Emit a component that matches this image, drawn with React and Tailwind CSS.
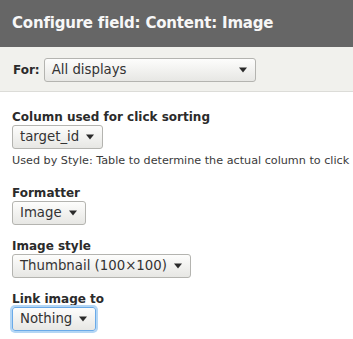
const font = { fontFamily: '"DejaVu Sans", Verdana, sans-serif' }

function Caret() {
  return (
    <svg width="8" height="6" viewBox="0 0 8 6" className="shrink-0">
      <path d="M0 0.5 L8 0.5 L4 5.5 Z" fill="#2a2a2a" />
    </svg>
  )
}

function Select({ label, width, focused = false }) {
  return (
    <div
      className={`flex h-[24px] items-center gap-[7px] rounded-[3px] border bg-gradient-to-b from-[#fdfdfc] to-[#e7e7e4] pl-[7px] pr-[8px] text-[13.3px] text-[#333] ${
        width ? 'justify-between' : 'self-start'
      } ${
        focused
          ? 'border-[#6aaae8] shadow-[0_0_0_2px_#b3d6f5]'
          : 'border-[#b4b4b0]'
      }`}
      style={width ? { width } : undefined}
    >
      <span className="whitespace-nowrap">{label}</span>
      <Caret />
    </div>
  )
}

function Field({ label, children }) {
  return (
    <div className="flex flex-col">
      <div className="text-[12px] font-bold leading-[16px] text-[#2b2b2b]">{label}</div>
      {children}
    </div>
  )
}

export default function App() {
  return (
    <div className="h-[339px] w-[353px] overflow-hidden bg-white" style={font}>
      <div className="flex h-[47px] items-center bg-[#666666] px-[12px]">
        <h1 className="whitespace-nowrap text-[15px] font-bold tracking-[-0.2px] text-[#f7f7f7]">
          Configure field: Content: Image
        </h1>
      </div>

      <div className="flex h-[45px] items-center gap-[4px] border-b border-[#dcdcd8] bg-[#f1f1ed] px-[13px] pt-[1px]">
        <span className="text-[12px] font-bold text-[#2b2b2b]">For:</span>
        <Select label="All displays" width={212} />
      </div>

      <div className="flex flex-col px-[12px] pt-[17px]">
        <Field label="Column used for click sorting">
          <Select label="target_id" />
        </Field>
        <div className="mt-[4px] whitespace-nowrap text-[11.2px] leading-[16px] text-[#3a3a3a]">
          Used by Style: Table to determine the actual column to click
        </div>

        <div className="mt-[16px] flex flex-col gap-[13px]">
          <Field label="Formatter">
            <Select label="Image" />
          </Field>

          <Field label="Image style">
            <Select label="Thumbnail (100×100)" />
          </Field>

          <Field label="Link image to">
            <Select label="Nothing" focused />
          </Field>
        </div>
      </div>
    </div>
  )
}
